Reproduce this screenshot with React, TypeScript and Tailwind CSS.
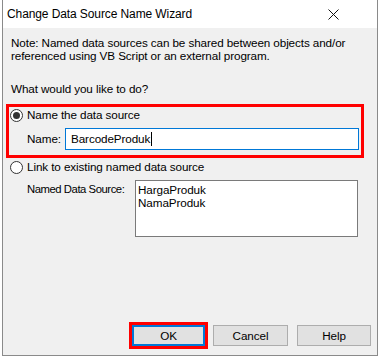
import React from "react";

const font = { fontFamily: '"Liberation Sans", Arial, sans-serif' };

function Radio({ checked }: { checked?: boolean }) {
  return (
    <span className="flex h-[13px] w-[13px] shrink-0 items-center justify-center rounded-full border border-[#333333] bg-white">
      {checked && <span className="h-[7px] w-[7px] rounded-full bg-[#333333]" />}
    </span>
  );
}

export default function App() {
  return (
    <div className="h-[357px] w-[379px] bg-white text-[11.7px] tracking-[-0.1px] text-black" style={font}>
      <div className="ml-[2px] flex h-[356px] w-[376px] flex-col border-x border-b border-[#8a8a8a] bg-[#f0f0f0]">
        {/* Title bar */}
        <div className="flex h-[28px] shrink-0 items-center justify-between bg-white pl-[4px] pr-[38px]">
          <span className="text-[12px] leading-none">Change Data Source Name Wizard</span>
          <svg width="11" height="11" viewBox="0 0 11 11">
            <path d="M0.5 0.5 L10.5 10.5 M10.5 0.5 L0.5 10.5" stroke="#111" strokeWidth="1" />
          </svg>
        </div>

        {/* Body */}
        <div className="flex flex-1 flex-col pt-[8px]">
          <p className="pl-[8px] leading-[13px]">
            Note: Named data sources can be shared between objects and/or
            <br />
            referenced using VB Script or an external program.
          </p>
          <p className="mt-[20px] pl-[8px] leading-[13px]">What would you like to do?</p>

          {/* Highlighted option */}
          <div className="ml-[3px] mt-[9px] h-[54px] w-[358px] border-[3px] border-[#ff0000] pt-[1px]">
            <label className="flex h-[14px] items-center gap-[4px] pl-[1px] leading-none">
              <Radio checked />
              Name the data source
            </label>
            <div className="mt-[6px] flex items-center pl-[18px]">
              <span className="w-[38px] shrink-0 whitespace-nowrap leading-none">Name:</span>
              <div className="flex h-[22px] w-[294px] items-center border border-[#0078d7] bg-white pl-[5px] leading-none">
                BarcodeProduk
                <span className="ml-[1px] h-[14px] w-px bg-black" />
              </div>
            </div>
          </div>

          <label className="mt-[2px] flex h-[14px] items-center gap-[4px] pl-[7px] leading-none">
            <Radio />
            Link to existing named data source
          </label>
          <div className="mt-[6px] flex items-start pl-[24px]">
            <span className="w-[108px] shrink-0 whitespace-nowrap pt-[4px] text-[11.3px] leading-none tracking-[-0.45px]">
              Named Data Source:
            </span>
            <div className="h-[57px] w-[223px] border border-[#7a7a7a] bg-white px-[2px] pt-[2px] leading-[13px]">
              <div>HargaProduk</div>
              <div>NamaProduk</div>
            </div>
          </div>

          {/* Buttons */}
          <div className="mt-[85px] flex items-center justify-end gap-[5px] pr-[6px]">
            <div className="border-[3px] border-[#ff0000]">
              <button className="flex h-[21px] w-[73px] items-center justify-center border-2 border-[#0078d7] bg-[#e1e1e1] leading-none">
                OK
              </button>
            </div>
            <button className="flex h-[21px] w-[75px] items-center justify-center border border-[#adadad] bg-[#e1e1e1] leading-none">
              Cancel
            </button>
            <button className="ml-[4px] flex h-[21px] w-[74px] items-center justify-center border border-[#adadad] bg-[#e1e1e1] leading-none">
              Help
            </button>
          </div>
        </div>
      </div>
    </div>
  );
}
